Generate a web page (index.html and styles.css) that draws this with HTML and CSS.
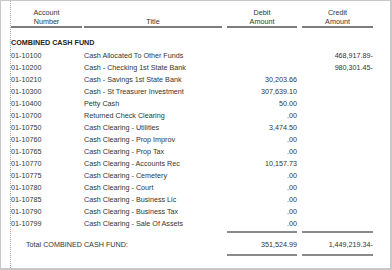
FILE: index.html
```html
<!DOCTYPE html>
<html>
<head>
<meta charset="utf-8">
<link rel="stylesheet" href="styles.css">
</head>
<body>
<div class="frame">
  <div class="report">
    <div class="row head">
      <div class="hcell c1"><span>Account<br>Number</span></div>
      <div class="hcell c2"><span><br>Title</span></div>
      <div class="hcell c3"><span>Debit<br>Amount</span></div>
      <div class="hcell c4"><span>Credit<br>Amount</span></div>
    </div>
    <div class="section">COMBINED CASH FUND</div>
    <div class="rows">
      <div class="row"><div>01-10100</div><div>Cash Allocated To Other Funds</div><div class="num"></div><div class="num cr">468,917.89-</div></div>
      <div class="row"><div>01-10200</div><div>Cash - Checking 1st State Bank</div><div class="num"></div><div class="num cr">980,301.45-</div></div>
      <div class="row"><div>01-10210</div><div>Cash - Savings 1st State Bank</div><div class="num">30,203.66</div><div class="num cr"></div></div>
      <div class="row"><div>01-10300</div><div>Cash - St Treasurer Investment</div><div class="num">307,639.10</div><div class="num cr"></div></div>
      <div class="row"><div>01-10400</div><div>Petty Cash</div><div class="num">50.00</div><div class="num cr"></div></div>
      <div class="row"><div>01-10700</div><div>Returned Check Clearing</div><div class="num">.00</div><div class="num cr"></div></div>
      <div class="row"><div>01-10750</div><div>Cash Clearing - Utilities</div><div class="num">3,474.50</div><div class="num cr"></div></div>
      <div class="row"><div>01-10760</div><div>Cash Clearing - Prop Improv</div><div class="num">.00</div><div class="num cr"></div></div>
      <div class="row"><div>01-10765</div><div>Cash Clearing - Prop Tax</div><div class="num">.00</div><div class="num cr"></div></div>
      <div class="row"><div>01-10770</div><div>Cash Clearing - Accounts Rec</div><div class="num">10,157.73</div><div class="num cr"></div></div>
      <div class="row"><div>01-10775</div><div>Cash Clearing - Cemetery</div><div class="num">.00</div><div class="num cr"></div></div>
      <div class="row"><div>01-10780</div><div>Cash Clearing - Court</div><div class="num">.00</div><div class="num cr"></div></div>
      <div class="row"><div>01-10785</div><div>Cash Clearing - Business Lic</div><div class="num">.00</div><div class="num cr"></div></div>
      <div class="row"><div>01-10790</div><div>Cash Clearing - Business Tax</div><div class="num">.00</div><div class="num cr"></div></div>
      <div class="row"><div>01-10799</div><div>Cash Clearing - Sale Of Assets</div><div class="num">.00</div><div class="num cr"></div></div>
    </div>
    <div class="row rule"><div></div><div></div><div class="line l3"></div><div class="line l4"></div></div>
    <div class="row total"><div class="tlabel">Total COMBINED CASH FUND:</div><div class="num">351,524.99</div><div class="num cr">1,449,219.34-</div></div>
    <div class="row rule"><div></div><div></div><div class="line l3"></div><div class="line l4"></div></div>
  </div>
</div>
</body>
</html>
```
FILE: styles.css
```css
html, body {
  margin: 0;
  padding: 0;
  background: #ffffff;
}
body {
  font-family: "Liberation Sans", Arial, sans-serif;
  font-size: 7.2px;
  color: #333333;
}
.frame {
  box-sizing: border-box;
  width: 392px;
  height: 270px;
  border-top: 1px solid #c8c8c8;
  border-left: 1px solid #c8c8c8;
  border-right: 2px solid #c8c8c8;
  border-bottom: 2px solid #c8c8c8;
  background: #fff;
  overflow: hidden;
}
.report {
  margin-left: 9px;
  height: 100%;
  border-left: 1px dotted #a8a8a8;
}
.row {
  display: grid;
  grid-template-columns: 73px 143px 75px 71px;
  height: 12px;
  align-items: center;
  white-space: nowrap;
}
.head {
  height: auto;
  padding-top: 7px;
  align-items: end;
}
.hcell span {
  display: block;
  text-align: center;
  line-height: 9px;
  border-bottom: 2px solid #7c7c7c;
}
.hcell.c1 span { margin-right: 2px; }
.hcell.c2 span { margin-right: 5px; }
.hcell.c3 span { margin-right: 5px; }
.section {
  margin-top: 9px;
  height: 12px;
  line-height: 12px;
  font-weight: bold;
  color: #222;
}
.num {
  text-align: right;
  padding-right: 5px;
}
.num.cr {
  padding-right: 0;
}
.rule {
  height: 4px;
  align-items: start;
}
.line {
  height: 2px;
  background: #8a8a8a;
  margin-top: 2px;
}
.line.l3 { margin-right: 5px; }
.total {
  grid-template-columns: 216px 75px 71px;
  height: 16px;
  padding-top: 3px;
}
.tlabel {
  padding-left: 15px;
}
```
